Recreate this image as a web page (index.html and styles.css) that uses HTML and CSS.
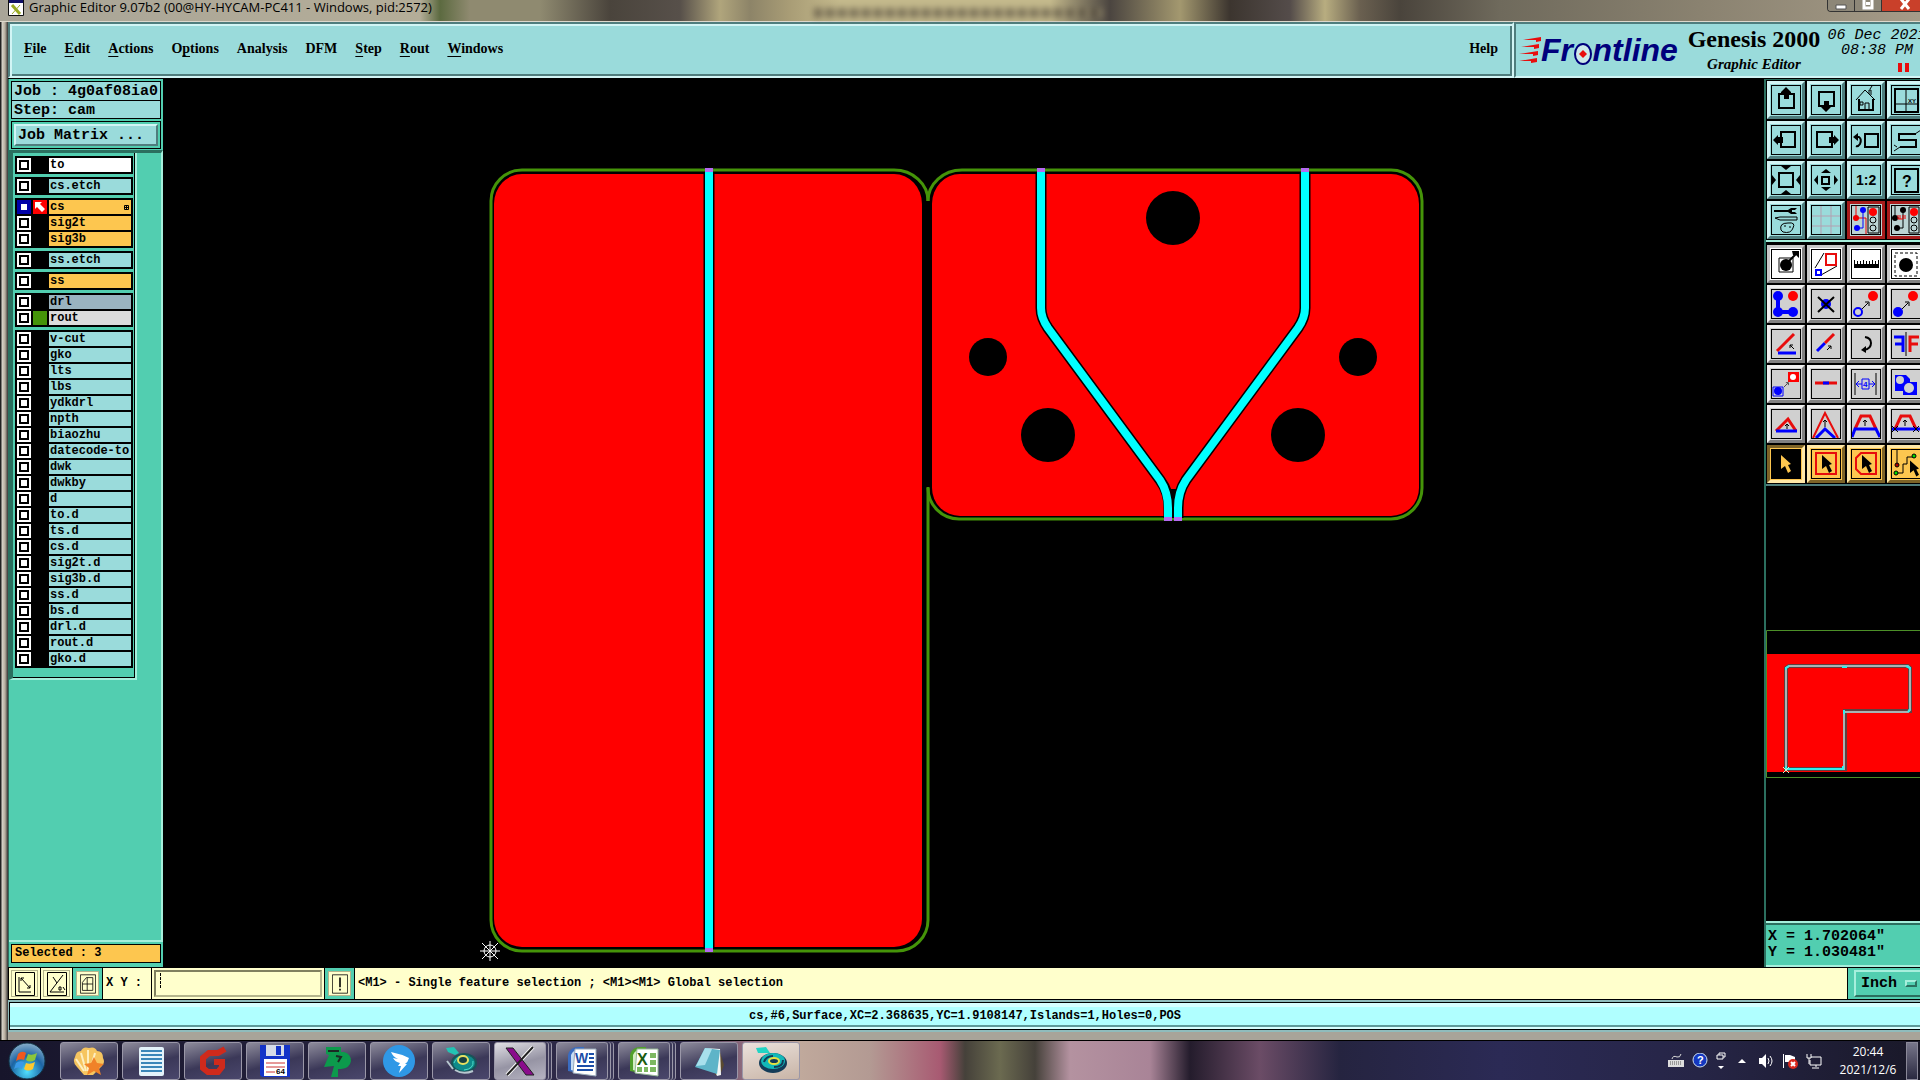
FILE: index.html
```html
<!DOCTYPE html>
<html lang="en">
<head>
    <meta charset="UTF-8">
    <meta name="viewport" content="width=device-width, initial-scale=1.0">
    <title>Graphic Editor 9.07b2</title>
    <link rel="stylesheet" href="styles.css">
</head>
<body>
    <svg class="defs" aria-hidden="true">
        <symbol id="cursor" viewBox="0 0 10 18"><path d="M0 0L10 9L7 10L10 16L7 18L4 11L0 14Z"/></symbol>
        <symbol id="small-arrow" viewBox="0 0 8 8"><path d="M0 8L6 2M3 1H7V5" fill="none" stroke="#000"/></symbol>
    </svg>

    <div class="window">
        <header class="title-bar">
            <svg class="app-icon" viewBox="0 0 16 16"><path fill="#fff" stroke="#111" d="M.5 0V15.500H15.500V0"/><path fill="#116" d="M1 0H15V3H1Z"/><path stroke="#9a2" stroke-width="3" d="M4 5L12 14"/><path stroke="#9a2" d="M12 5L4 14"/></svg>
            <span class="title-text">Graphic Editor 9.07b2 (00@HY-HYCAM-PC411 - Windows, pid:2572)</span>
            <div class="behind"></div>
            <div class="window-buttons">
                <button aria-label="Minimize"><svg viewBox="0 0 12 12"><path fill="#fff" stroke="#555" d="M1 5H11V9H1Z"/></svg></button>
                <button aria-label="Maximize"><svg viewBox="0 0 12 12"><path fill="none" stroke="#fff" stroke-width="3" d="M2 0V8H10V0"/><path fill="#fff" d="M4 2H8V5H4Z"/></svg></button>
                <button class="close" aria-label="Close"><svg viewBox="0 0 12 12"><path stroke="#fff" stroke-width="3" d="M2 -1L10 9M10 -1L2 9"/></svg></button>
            </div>
        </header>

        <div class="top">
            <nav class="menu">
                <button><u>F</u>ile</button>
                <button><u>E</u>dit</button>
                <button><u>A</u>ctions</button>
                <button>O<u>p</u>tions</button>
                <button>Analysis</button>
                <button>DFM</button>
                <button><u>S</u>tep</button>
                <button><u>R</u>out</button>
                <button><u>W</u>indows</button>
                <button class="help">Help</button>
            </nav>
            <div class="brand">
                <svg class="stripes" viewBox="0 0 22 26"><g fill="#e80c0c"><path d="M4 3L22 0V4L17 5V3Z"/><path d="M2 10L20 7V11L15 12V10Z"/><path d="M0 17L19 14V18L14 19V17Z"/><path d="M0 24L18 21V25L12 26V24Z"/></g></svg>
                <div class="frontline">Fr<span class="ring">o<svg viewBox="0 0 20 24"><ellipse cx="10" cy="12" rx="8" ry="10" fill="#fff8f8" fill-opacity=".5" stroke="#00007c" stroke-width="2"/><path fill="#e80c0c" d="M10 8L14 12L10 16L6 12Z"/></svg></span>ntline</div>
                <div class="product">
                    <div class="product-name">Genesis 2000</div>
                    <div class="product-sub">Graphic Editor</div>
                </div>
                <div class="clock">
                    <div>06 Dec 2021</div>
                    <div>08:38 PM</div>
                    <div class="pause"><i></i><i></i></div>
                </div>
            </div>
        </div>

        <div class="work">
            <aside class="left">
                <div class="job">
                    <div>Job : 4g0af08ia0</div>
                    <div>Step: cam</div>
                </div>
                <div class="matrix"><button>Job Matrix ...</button></div>
                <div class="layers-area">
                    <div class="layers">
                        <div class="group">
                            <label class="layer white"><input type="checkbox"><i></i><span>to</span></label>
                        </div>
                        <div class="group">
                            <label class="layer"><input type="checkbox"><i></i><span>cs.etch</span></label>
                        </div>
                        <div class="group">
                            <label class="layer signal work-layer"><input type="checkbox" checked><i><svg viewBox="0 0 14 14"><path fill="#fff" d="M2 2H9L7 4L12 9L9 12L4 7L2 9Z"/></svg></i><span>cs<svg class="mark" viewBox="0 0 5 5"><path fill="none" stroke="#000" d="M.5 .5H4.500V4.500H.5ZM2.500 0V5M0 2.500H5" stroke-width="1"/></svg></span></label>
                            <label class="layer signal"><input type="checkbox"><i></i><span>sig2t</span></label>
                            <label class="layer signal"><input type="checkbox"><i></i><span>sig3b</span></label>
                        </div>
                        <div class="group">
                            <label class="layer"><input type="checkbox"><i></i><span>ss.etch</span></label>
                        </div>
                        <div class="group">
                            <label class="layer signal"><input type="checkbox"><i></i><span>ss</span></label>
                        </div>
                        <div class="group">
                            <label class="layer drill"><input type="checkbox"><i></i><span>drl</span></label>
                            <label class="layer rout"><input type="checkbox"><i></i><span>rout</span></label>
                        </div>
                        <div class="group">
                            <label class="layer"><input type="checkbox"><i></i><span>v-cut</span></label>
                            <label class="layer"><input type="checkbox"><i></i><span>gko</span></label>
                            <label class="layer"><input type="checkbox"><i></i><span>lts</span></label>
                            <label class="layer"><input type="checkbox"><i></i><span>lbs</span></label>
                            <label class="layer"><input type="checkbox"><i></i><span>ydkdrl</span></label>
                            <label class="layer"><input type="checkbox"><i></i><span>npth</span></label>
                            <label class="layer"><input type="checkbox"><i></i><span>biaozhu</span></label>
                            <label class="layer"><input type="checkbox"><i></i><span>datecode-to</span></label>
                            <label class="layer"><input type="checkbox"><i></i><span>dwk</span></label>
                            <label class="layer"><input type="checkbox"><i></i><span>dwkby</span></label>
                            <label class="layer"><input type="checkbox"><i></i><span>d</span></label>
                            <label class="layer"><input type="checkbox"><i></i><span>to.d</span></label>
                            <label class="layer"><input type="checkbox"><i></i><span>ts.d</span></label>
                            <label class="layer"><input type="checkbox"><i></i><span>cs.d</span></label>
                            <label class="layer"><input type="checkbox"><i></i><span>sig2t.d</span></label>
                            <label class="layer"><input type="checkbox"><i></i><span>sig3b.d</span></label>
                            <label class="layer"><input type="checkbox"><i></i><span>ss.d</span></label>
                            <label class="layer"><input type="checkbox"><i></i><span>bs.d</span></label>
                            <label class="layer"><input type="checkbox"><i></i><span>drl.d</span></label>
                            <label class="layer"><input type="checkbox"><i></i><span>rout.d</span></label>
                            <label class="layer"><input type="checkbox"><i></i><span>gko.d</span></label>
                        </div>
                    </div>
                </div>
                <div class="selected">Selected : 3</div>
            </aside>

            <main class="canvas">
                <svg viewBox="163 79 1601 888" preserveAspectRatio="xMinYMin meet">
                    <!-- copper -->
                    <path fill="#f00" d="M522 174H894A28 30 0 0 1 922 204V919A28 28 0 0 1 894 947H522A28 28 0 0 1 494 919V204A28 30 0 0 1 522 174Z"/>
                    <path fill="#f00" d="M960 174H1391A28 30 0 0 1 1419 204V488A28 28 0 0 1 1391 516H960A28 28 0 0 1 932 488V204A28 30 0 0 1 960 174Z"/>
                    <g fill="#000">
                        <circle cx="1173" cy="218" r="27"/>
                        <circle cx="988" cy="357" r="19"/>
                        <circle cx="1358" cy="357" r="19"/>
                        <circle cx="1048" cy="435" r="27"/>
                        <circle cx="1298" cy="435" r="27"/>
                    </g>
                    <!-- rout outline -->
                    <g fill="none" stroke="#459409" stroke-width="3">
                        <path d="M928 201A34 31 0 0 0 894 170H522A31 31 0 0 0 491 201V920A31 31 0 0 0 522 951H897A31 31 0 0 0 928 920V487"/>
                        <path d="M928 201A34 31 0 0 1 962 170H1391A31 31 0 0 1 1422 201V488A31 31 0 0 1 1391 519H959A31 31 0 0 1 928 488"/>
                    </g>
                    <!-- v-cut lines -->
                    <g fill="none" stroke="#000" stroke-width="11">
                        <path d="M709 172V949"/>
                        <path d="M1041 172V308Q1041 318 1048 328L1160 480Q1169 492 1169 508V518"/>
                        <path d="M1305 172V308Q1305 318 1298 328L1186 480Q1178 492 1178 508V518"/>
                    </g>
                    <path d="M1169 489H1178V518H1169Z"/>
                    <g fill="none" stroke="#0ff" stroke-width="8">
                        <path d="M709 172V949"/>
                        <path d="M1041 172V308Q1041 318 1048 328L1160 480Q1168 492 1168 508V518"/>
                        <path d="M1305 172V308Q1305 318 1298 328L1186 480Q1178 492 1178 508V518"/>
                    </g>
                    <path stroke="#b46af0" stroke-width="4" d="M705 170H713M705 950H713M1037 170H1045M1301 170H1309M1164 519H1172M1174 519H1182"/>
                    <!-- origin -->
                    <g fill="none" stroke="#fff">
                        <circle cx="490" cy="951" r="6"/>
                        <path d="M480 951H500M490 941V961M482 943L498 959M498 943L482 959"/>
                    </g>
                </svg>
            </main>

            <aside class="right">
                <div class="tools view">
                    <button><svg viewBox="0 0 30 30"><path class="k2" d="M8 9H23V23H8Z"/><path d="M15 2L20 7V9H18V14H13V9H10V7Z"/></svg></button>
                    <button><svg viewBox="0 0 30 30"><path class="k2" d="M8 7H23V21H8Z"/><path d="M15 27L20 22V20H18V16H13V20H10V22Z"/></svg></button>
                    <button><svg viewBox="0 0 30 30"><path class="k1" d="M5 15L14 5L24 15M18 9V5H20V10M19 4L21 1M14 26V18H18V26M9 17H12V20H9Z"/><path class="k2" d="M8 14V25H22V14"/></svg></button>
                    <button><svg viewBox="0 0 30 30"><path class="k2" d="M4 4H27V27H4Z"/><path class="k1" d="M15 4V27M4 19H27"/><text x="17" y="18" font-size="6">XY</text></svg></button>
                    <button><svg viewBox="0 0 30 30"><path class="k2" d="M10 7H24V22H10Z"/><path d="M2 15L7 10V12H12V18H7V20Z"/></svg></button>
                    <button><svg viewBox="0 0 30 30"><path class="k2" d="M6 7H21V22H6Z"/><path d="M28 15L23 10V12H18V18H23V20Z"/></svg></button>
                    <button><svg viewBox="0 0 30 30"><path class="k2" d="M14 9H27V22H14Z"/><path class="k2" d="M5 12H8Q11 14 9 19Q7 22 5 21"/><path d="M2 12L7 8V16Z"/></svg></button>
                    <button><svg viewBox="0 0 30 30"><path class="k2" d="M25 9H8V15H25V22H9"/><path class="k1" d="M24 9L30 5M9 22L3 26M3 20L6 22"/></svg></button>
                    <button><svg viewBox="0 0 30 30"><path class="k2" d="M8 8H22V22H8Z"/><path d="M10 1H20L15 5ZM10 29H20L15 25ZM1 10V20L5 15ZM29 10V20L25 15Z"/></svg></button>
                    <button><svg viewBox="0 0 30 30"><path class="k2" d="M11 12H18V19H11Z"/><path d="M10 8H20L15 4ZM10 22H20L15 26ZM7 10V20L3 15ZM23 10V20L27 15Z"/></svg></button>
                    <button><svg viewBox="0 0 30 30"><text x="5" y="20" font-size="14">1:2</text></svg></button>
                    <button><svg viewBox="0 0 30 30"><path class="k2" d="M4 4H27V27H4Z"/><text x="11" y="22" font-size="16">?</text></svg></button>
                    <button><svg viewBox="0 0 30 30"><path d="M3 5H17L20 3H26L24 5H21V7H24L26 9H20L17 7H3Z"/><path class="k1" d="M4 13L9 12H26V15H9Z"/><path class="k1" d="M10 25Q8 18 17 18Q25 17 22 23Q20 29 12 27ZM13 21H15M18 22H20"/></svg></button>
                    <button><svg viewBox="0 0 30 30"><path stroke="#b39fb0" d="M10 1V29M20 1V29M1 11H29M1 21H29"/></svg></button>
                    <button class="alert"><svg viewBox="0 0 30 30"><path fill="none" stroke="#e00" d="M5 1V13H15V29"/><path fill="none" stroke="#00f" d="M12 5V23H6"/><g fill="#00f"><circle cx="12" cy="5" r="3"/><circle cx="6" cy="23" r="3"/></g><circle cx="5" cy="13" r="3" fill="#e00"/><path class="k1" d="M17 2H28V28H17Z"/><circle cx="22" cy="7" r="4" fill="#f00"/><circle class="k1" cx="22" cy="15" r="3"/><circle class="k1" cx="22" cy="23" r="3"/></svg></button>
                    <button class="alert"><svg viewBox="0 0 30 30"><path class="k1" d="M4 1V13M12 5V23H6M4 13H8"/><circle cx="12" cy="5" r="3"/><circle cx="6" cy="23" r="3"/><circle cx="4" cy="13" r="3"/><path stroke="#e00" fill="none" d="M7 10V14H12V10M9 10V14M14 10V14"/><path class="k1" d="M18 2H28V28H18Z"/><circle cx="23" cy="7" r="4" fill="#f00"/><circle class="k1" cx="23" cy="15" r="3"/><circle class="k1" cx="23" cy="23" r="3"/></svg></button>
                </div>
                <div class="tools edit">
                    <button class="paper"><svg viewBox="0 0 30 30"><path class="k1" d="M8 9H22V23H8Z"/><circle cx="15" cy="16" r="6"/><path class="k2" d="M18 12L26 4"/><path d="M21 2H28V9L25 6H22Z"/></svg></button>
                    <button class="paper"><svg viewBox="0 0 30 30"><path class="k1" d="M4 19L13 4M10 26L26 17"/><path class="r2" d="M15 5H25V16H15Z"/><path class="b2" d="M5 21H10V26H5Z"/></svg></button>
                    <button class="paper"><svg viewBox="0 0 30 30"><path d="M3 11H4V15H6V12H7V15H9V12H10V15H12V11H13V15H15V12H16V15H18V12H19V15H21V11H22V15H24V12H25V15H27V11H28V19H3Z"/></svg></button>
                    <button class="paper"><svg viewBox="0 0 30 30"><path class="k1" stroke-dasharray="3 2" d="M4 4H26V27H4Z"/><circle cx="15" cy="16" r="7"/></svg></button>
                    <button><svg viewBox="0 0 30 30"><path fill="none" stroke="#00f" stroke-width="4" d="M7 7V23H22"/><g fill="#00f"><circle cx="7" cy="7" r="5"/><circle cx="7" cy="23" r="5"/><circle cx="22" cy="23" r="5"/></g><circle cx="22" cy="7" r="5" fill="#f00"/></svg></button>
                    <button><svg viewBox="0 0 30 30"><circle cx="15" cy="15" r="5" fill="#00f"/><path class="k2" d="M7 8L23 23M23 8L7 23"/></svg></button>
                    <button><svg viewBox="0 0 30 30"><circle class="b2" cx="7" cy="23" r="4"/><circle cx="22" cy="7" r="5" fill="#f00"/><use href="#small-arrow" x="11" y="12" width="8" height="8"/></svg></button>
                    <button><svg viewBox="0 0 30 30"><circle cx="7" cy="23" r="5" fill="#00f"/><circle cx="22" cy="7" r="5" fill="#f00"/><use href="#small-arrow" x="11" y="12" width="8" height="8"/></svg></button>
                    <button><svg viewBox="0 0 30 30"><path class="r3" d="M6 22L23 5"/><path class="b3" d="M7 24H25"/><path class="k1" d="M23 20L19 16M19 19V16H22"/></svg></button>
                    <button><svg viewBox="0 0 30 30"><path class="b3" d="M6 22L14 14"/><path class="r3" d="M14 14L23 5"/><path class="k1" d="M16 21L20 17M17 17H20V20"/></svg></button>
                    <button><svg viewBox="0 0 30 30"><path class="k2" d="M14 8Q20 9 20 14Q20 20 13 21"/><path d="M10 21L15 17V24Z"/></svg></button>
                    <button><svg viewBox="0 0 30 30"><path class="b3" d="M3 8H12V23M4 15H12"/><path class="k1" d="M15 3V27"/><path class="r3" d="M28 8H19V23M19 15H27"/></svg></button>
                    <button><svg viewBox="0 0 30 30"><path fill="none" stroke="#00f" d="M2 18H12V27H2Z"/><circle cx="7" cy="22" r="4" fill="#00f"/><path fill="#f00" d="M17 3H28V13H17Z"/><circle cx="22" cy="8" r="3" fill="#fff"/><use href="#small-arrow" x="13" y="13" width="5" height="5"/></svg></button>
                    <button><svg viewBox="0 0 30 30"><path class="r3" d="M4 14H26"/><path class="b3" d="M12 14H18"/></svg></button>
                    <button><svg viewBox="0 0 30 30"><path class="k1" d="M4 4V26M25 4V26"/><path fill="none" stroke="#00f" d="M11 10H18V20H11ZM5 15H11M18 15H24M8 12L5 15L8 18M21 12L24 15L21 18"/><text x="12" y="18" font-size="8" fill="#00f">4</text></svg></button>
                    <button><svg viewBox="0 0 30 30"><path fill="#00f" d="M4 6H15L19 10V13H26V26H12V22H4Z"/><circle cx="9" cy="11" r="4" fill="#d0d0d0"/><circle cx="18" cy="19" r="5" fill="#d0d0d0"/></svg></button>
                    <button><svg viewBox="0 0 30 30"><path class="r3" d="M5 22L17 10L25 22"/><path class="b3" d="M5 22H26"/><path class="k1" d="M16 20V15M14 17L16 15L18 17"/></svg></button>
                    <button><svg viewBox="0 0 30 30"><path class="r2" d="M2 29L14 4L27 29"/><path class="b3" d="M5 29L14 20L24 29"/><path class="k1" d="M14 18V11M12 13L14 11L16 13"/></svg></button>
                    <button><svg viewBox="0 0 30 30"><path class="r3" d="M4 20L10 7H19L25 20"/><path class="b3" d="M1 28L4 20H25L29 28"/><path class="k1" d="M14 17V11M12 13L14 11L16 13"/></svg></button>
                    <button><svg viewBox="0 0 30 30"><path class="r3" d="M4 20L10 7H19L25 20"/><path class="b3" d="M1 20H29"/><path class="k1" d="M14 17V11M12 13L14 11L16 13M1 17L7 23M7 17L1 23M22 17L28 23M28 17L22 23"/></svg></button>
                    <button class="pick active"><svg viewBox="0 0 30 30"><use href="#cursor" x="10" y="6" width="10" height="18" fill="#fdc64f"/></svg></button>
                    <button class="pick"><svg viewBox="0 0 30 30"><path class="r2" d="M5 4H25V25H5Z"/><use href="#cursor" x="11" y="6" width="10" height="18"/></svg></button>
                    <button class="pick"><svg viewBox="0 0 30 30"><path class="r2" d="M10 4H25V25H10L5 20V9Z"/><use href="#cursor" x="11" y="6" width="10" height="18"/></svg></button>
                    <button class="pick"><svg viewBox="0 0 30 30"><path class="k1" d="M6 1V16M5 24H12V15H16V8H23"/><g stroke="#000"><circle cx="6" cy="16" r="2" fill="#a00"/><circle cx="5" cy="24" r="2" fill="#0d0"/><circle cx="23" cy="7" r="2" fill="#0d0"/></g><use href="#cursor" x="19" y="11" width="9" height="17"/></svg></button>
                </div>
                <div class="overview">
                    <svg viewBox="1766 486 154 435" preserveAspectRatio="xMinYMin slice">
                        <path fill="#f00" d="M1766 654H1920V772H1766Z"/>
                        <path fill="none" stroke="#4c8f28" d="M1925 630.500H1766.500V777.500H1925"/>
                        <path fill="none" stroke="#5f4040" stroke-width="4" d="M1789 666H1908L1910 668V711H1845V769H1786V668Z"/>
                        <path fill="none" stroke="#a8b4b4" stroke-width="2" d="M1789 666H1908L1910 668V710L1908 712H1844V769H1786V668Z"/>
                        <path fill="none" stroke="#3ee" stroke-width="2" d="M1786 670V668L1789 666M1906 666L1910 668V670M1842 667H1847M1844 714V710M1910 709L1908 712M1786 766V769H1843V766"/>
                        <path stroke="#cfc" d="M1783 773L1789 767M1783 767L1789 773"/>
                    </svg>
                </div>
                <div class="coords">
                    <div>X = 1.702064"</div>
                    <div>Y = 1.030481"</div>
                </div>
            </aside>
        </div>

        <div class="command">
            <button class="mode"><svg viewBox="0 0 20 24"><path d="M.5 .5H19.500V23.500H.5Z"/><path d="M4 5V20H16M6 6L15 16M6 9V6H9M15 13V16H12"/></svg></button>
            <button class="mode"><svg viewBox="0 0 20 24"><path d="M.5 .5H19.500V23.500H.5Z"/><path d="M16 3L3 20H17M6 5L10 11M12 15H14V18H12ZM16 15L18 18"/></svg></button>
            <button class="mode teal"><svg viewBox="0 0 20 24"><path d="M.5 .5H19.500V23.500H.5Z"/><path d="M3 10L8 4H16V20H3ZM3 12H16M9 4V20"/></svg></button>
            <label class="xy" for="xy">X Y :</label>
            <div class="entry"><input id="xy" type="text"><i class="caret"></i></div>
            <button class="mode teal"><svg viewBox="0 0 20 24"><path d="M.5 .5H19.500V23.500H.5Z"/><path d="M10 4V16M10 18V20" stroke-width="2"/></svg></button>
            <div class="message">&lt;M1&gt; - Single feature selection ; &lt;M1&gt;&lt;M1&gt; Global selection</div>
            <div class="units"><select aria-label="Units"><option>Inch</option></select><i></i></div>
        </div>
        <div class="status"><div>cs,#6,Surface,XC=2.368635,YC=1.9108147,Islands=1,Holes=0,POS</div></div>
    </div>

    <footer class="taskbar">
        <button class="start" aria-label="Start"><svg viewBox="0 0 38 38"><defs><radialGradient id="orb" cx=".5" cy=".8" r=".9"><stop offset="0" stop-color="#4fe0ff"/><stop offset=".5" stop-color="#1c64a4"/><stop offset="1" stop-color="#a8c4d4"/></radialGradient></defs><circle cx="19" cy="19" r="18" fill="url(#orb)" stroke="#134"/><path fill="#f0581e" d="M10 12Q14 8 18 11L16 18Q12 16 8 19Z"/><path fill="#8cc63a" d="M20 12Q24 14 29 11L27 18Q22 21 18 18Z"/><path fill="#3a9ae8" d="M8 21Q12 18 16 20L14 27Q10 24 6 27Z"/><path fill="#fdc82e" d="M18 21Q22 23 27 20L25 27Q20 30 16 27Z"/></svg></button>
        <button class="app"><svg viewBox="0 0 32 32"><path fill="#f6c560" d="M16 3Q22 1 24 6Q30 6 30 13Q33 18 27 23L20 30H11L4 22Q-1 17 2 12Q3 6 8 6Q10 1 16 3Z"/><path fill="none" stroke="#fdeec0" stroke-width="2" d="M15 26V5M13 26L8 8M11 26L3 14M17 26L22 8"/><path fill="#f08228" d="M21 12L24 18L31 19L26 23L28 30L21 26L14 30L16 23L11 19L18 18Z"/></svg></button>
        <button class="app"><svg viewBox="0 0 32 32"><rect x="4" y="2" width="25" height="29" rx="2" fill="#e4f3fa"/><path stroke="#3a86b8" stroke-width="2" d="M6 6H27M6 10H27M6 14H27M6 18H27M6 22H27M6 26H27"/></svg></button>
        <button class="app"><svg viewBox="0 0 32 32"><path fill="none" stroke="#cf2a1c" stroke-width="6" d="M28 4L21 8H12L6 13V23L11 27H21L25 22V17H17"/></svg></button>
        <button class="app"><svg viewBox="0 0 32 32"><path fill="#1434c8" d="M1 0H31V32H3L1 30Z"/><path fill="#d6dce8" d="M7 0H25V11H7Z"/><path fill="#1434c8" d="M17 1H22V10H17Z"/><path fill="#fff" d="M5 14H28V31H5Z"/><path stroke="#c33" d="M7 18H26M7 22H26M7 27H16"/><text x="17" y="29" font-size="8">64</text></svg></button>
        <button class="app"><svg viewBox="0 0 32 32"><path fill="#0c9a4c" d="M5 2H20V7H23Q30 9 30 16Q29 23 20 24H17V32H10L13 21L3 22L8 10L5 9Z"/><path fill="none" stroke="#1c2a24" stroke-width="2" d="M7 6H18M15 11L20 12L17 17"/></svg></button>
        <button class="app"><svg viewBox="0 0 32 32"><ellipse cx="16" cy="16" rx="16" ry="16" fill="#2f98e6"/><path fill="#fff" d="M8 7Q18 9 26 13Q25 17 22 19H24L16 28L18 21H15L17 18Q12 17 10 13L15 14Q10 12 8 7Z"/></svg></button>
        <button class="app"><svg viewBox="0 0 32 32"><ellipse cx="19" cy="18" rx="12" ry="9" fill="#0e8a8a" stroke="#185458" stroke-width="2"/><path fill="#22c4b4" d="M1 3L9 2L14 8L10 10L3 7Z"/><path fill="none" stroke="#50dcc8" d="M9 18Q12 10 20 11M28 16Q29 24 19 25"/><ellipse cx="18" cy="15" rx="5" ry="4" fill="#184040" stroke="#e8e060" stroke-width="2"/><path stroke="#b8c8d0" stroke-width="2" fill="none" d="M2 16L8 24M10 25Q18 30 28 26"/></svg></button>
        <button class="app stacked lit"><svg viewBox="0 0 32 32"><path stroke="#fff" stroke-width="4" d="M29 2L3 30"/><path fill="#8a0c8c" stroke="#222" d="M2 3H9L30 30H22Z"/><path stroke="#222" stroke-width="2" d="M29 2L3 30"/></svg></button>
        <button class="app stacked"><svg viewBox="0 0 32 32"><path fill="#3a6cc0" d="M2 10Q4 2 12 2H18V29L2 26Z"/><path fill="#c6dcf4" d="M5 10Q7 5 13 4V27L5 25Z"/><path fill="#fff" stroke="#9ab" d="M9 4H30V31L7 28Z"/><text x="9" y="18" font-size="14" fill="#1c4ea8">W</text><path stroke="#1c4ea8" stroke-width="2" d="M23 9H28M23 13H28M23 17H28M11 21H28M11 25H27"/></svg></button>
        <button class="app stacked"><svg viewBox="0 0 32 32"><path fill="#52a02c" d="M2 10Q4 2 12 2H18V29L2 26Z"/><path fill="#d4ecc4" d="M5 10Q7 5 13 4V27L5 25Z"/><path fill="#fff" stroke="#9b9" d="M9 4H30V31L7 28Z"/><path fill="#7cb860" d="M22 8H28V13H22ZM22 15H28V20H22ZM22 22H28V27H22ZM9 22H14V27H9ZM16 22H20V27H16Z"/><text x="9" y="20" font-size="16" fill="#1c5c10">X</text></svg></button>
        <button class="app"><svg viewBox="0 0 32 32"><path fill="#5a4a30" d="M26 4L31 20L27 30L22 30Z"/><path fill="#f2f6f4" d="M12 3L27 4L28 30L24 31Z"/><path fill="#5eb4c8" d="M12 3L27 5L24 29L2 22Z"/><path fill="#a8e0ec" d="M12 3L19 4L12 20L3 21Z"/></svg></button>
        <button class="app glass"><svg viewBox="0 0 32 32"><ellipse cx="18" cy="18" rx="14" ry="10" fill="#143c58"/><ellipse cx="18" cy="16" rx="12" ry="8" fill="#12b8b8"/><path fill="#22d4c4" d="M1 3L11 2L15 8L3 8Z"/><path fill="none" stroke="#143c58" stroke-width="2" d="M9 17Q11 11 18 11M28 15Q28 22 19 22"/><ellipse cx="19" cy="16" rx="5" ry="3" fill="#143c58" stroke="#e8e040" stroke-width="2"/></svg></button>
        <div class="tray">
            <svg class="keyboard" viewBox="0 0 16 16"><path fill="#ddd" d="M0 7H16V14H0Z"/><path fill="none" stroke="#ddd" d="M4 6Q5 2 9 4Q12 5 13 1"/><path stroke="#555" stroke-dasharray="1 1" d="M2 9H14M2 11H14"/></svg>
            <svg class="question" viewBox="0 0 16 16"><circle cx="8" cy="7" r="7" fill="#1438c0" stroke="#cde"/><text x="5" y="11" font-size="11" fill="#fff">?</text></svg>
            <svg class="restore" viewBox="0 0 10 18"><path fill="none" stroke="#fff" d="M3 3V1H9V5H7M1 3H7V7H1Z"/><path fill="#fff" d="M2 14H8L5 17Z"/></svg>
            <svg class="up" viewBox="0 0 8 8"><path fill="#fff" d="M0 6L4 2L8 6Z"/></svg>
            <svg class="icon" viewBox="0 0 16 16"><path fill="#fff" d="M1 5H4L8 1V15L4 11H1Z"/><path fill="none" stroke="#fff" d="M10 5Q12 8 10 11M12 3Q16 8 12 13"/></svg>
            <svg class="icon" viewBox="0 0 16 16"><path fill="#fff" d="M1 1H2V15H1ZM3 2H8L13 4V9H3Z"/><circle cx="11" cy="11" r="5" fill="#d8281c"/><path stroke="#fff" stroke-width="2" d="M9 9L13 13M13 9L9 13"/></svg>
            <svg class="icon" viewBox="0 0 16 16"><path fill="none" stroke="#fff" d="M5 4H15V12H4V7M10 12V14M6 15H13M1 1V5H5V1M3 5V11"/></svg>
            <div class="time"><div>20:44</div><div>2021/12/6</div></div>
            <button class="desktop" aria-label="Show desktop"></button>
        </div>
    </footer>
</body>
</html>
```
FILE: styles.css
```css
* {
    box-sizing: border-box;
}

html, body {
    margin: 0;
    height: 100%;
    overflow: hidden;
}

body {
    display: flex;
    flex-direction: column;
    background: #000;
    font-family: "Liberation Mono", monospace;
    font-size: 12px;
    font-weight: bold;
    color: #000;
}

button, input, select {
    font: inherit;
    color: inherit;
    margin: 0;
    padding: 0;
    border: none;
    border-radius: 0;
    background: none;
}

svg {
    display: block;
}

.defs {
    position: absolute;
    width: 0;
    height: 0;
}

/* window frame */
.window {
    flex: 1;
    min-height: 0;
    display: flex;
    flex-direction: column;
    padding: 0 0 8px 8px;
    background: linear-gradient(90deg, #222 1px, #d8d4ca 2px, #b7ae9f 5px, #333 8px, #a8a499 8px);
}

.title-bar {
    flex: none;
    display: flex;
    align-items: flex-start;
    height: 22px;
    margin-left: -8px;
    padding-left: 8px;
    border-bottom: 1px solid #ddd8cc;
    background: linear-gradient(90deg, #a9a598 0, #b4ad98 420px, #5c6a40 440px, #8f8a70 470px, #8f8a70 540px, #4a443c 610px, #57504a 680px, #b0a57c 720px, #8d8468 750px, #a99d76 790px, #c4b98c 840px, #c4b98c 1050px, #4b4540 1110px, #a3986f 1180px, #3c352f 1230px, #544c4a 1290px, #b8ad80 1325px, #6a6050 1360px, #4a443c 1400px, #6f6a5c 1500px, #8a8270 1700px, #a59b88 1920px);
}

.app-icon {
    width: 16px;
    height: 16px;
}

.title-text {
    margin-left: 5px;
    font-family: "Open Sans", sans-serif;
    font-size: 13px;
    font-weight: normal;
    line-height: 14px;
}

/* blurred caption of the window behind the glass */
.behind {
    flex: none;
    width: 288px;
    height: 10px;
    margin: 8px 0 0 382px;
    background: repeating-linear-gradient(90deg, #4a4236 0 7px, #a89c78 9px 12px);
    filter: blur(3px);
    opacity: .6;
}

.window-buttons {
    display: flex;
    margin-left: auto;
    width: 93px;
    height: 12px;
    overflow: hidden;
    border: 1px solid #333;
    border-top: none;
    border-right: none;
    border-radius: 0 0 0 4px;
}

.window-buttons button {
    flex: 0 0 27px;
    display: flex;
    justify-content: center;
    border-right: 1px solid #333;
    background: #8d8778;
}

.window-buttons svg {
    width: 12px;
    height: 12px;
}

.window-buttons .close {
    flex-basis: 46px;
    background: #c9402a;
}

/* menu */
.top {
    flex: none;
    display: flex;
    height: 57px;
    border-bottom: 1px solid #000;
    background: #9adbdb;
}

.menu {
    flex: 1;
    display: flex;
    align-items: center;
    padding: 0 12px 2px 14px;
    border: 2px solid #4f7d7d;
    border-right-color: #d2f5f5;
    border-bottom-color: #d2f5f5;
    box-shadow: inset 2px 2px #d2f5f5, inset -2px -2px #4f7d7d;
    font-family: "Liberation Serif", serif;
    font-size: 14px;
}

.menu button {
    margin-right: 18px;
}

.menu u {
    text-underline-offset: 3px;
}

.menu .help {
    margin-left: auto;
    margin-right: 2px;
}

.brand {
    flex: none;
    display: flex;
    align-items: flex-start;
    width: 406px;
    padding: 4px 0 0 3px;
    border: 2px solid #4f7d7d;
    border-right: none;
    border-bottom: 2px solid #d2f5f5;
    white-space: nowrap;
}

.stripes {
    flex: none;
    width: 22px;
    height: 26px;
    margin-top: 9px;
}

.frontline {
    flex: none;
    margin-top: 4px;
    width: 144px;
    font-family: "Liberation Sans", sans-serif;
    font-size: 32px;
    font-style: italic;
    line-height: 36px;
    color: #00007c;
}

.ring {
    position: relative;
    color: transparent;
}

.ring svg {
    position: absolute;
    left: 0;
    bottom: 2px;
    width: 20px;
    height: 24px;
}

.product {
    flex: none;
    width: 138px;
    font-family: "Liberation Serif", serif;
    text-align: center;
}

.product-name {
    font-size: 24px;
    line-height: 22px;
}

.product-sub {
    margin-top: 6px;
    font-size: 15px;
    font-style: italic;
}

.clock {
    flex: none;
    width: 108px;
    font-size: 15px;
    font-style: italic;
    font-weight: normal;
    line-height: 15px;
    text-align: center;
}

.pause {
    display: flex;
    justify-content: flex-end;
    gap: 3px;
    margin: 5px 22px 0 0;
}

.pause i {
    width: 4px;
    height: 9px;
    background: #e80c0c;
}

/* left column */
.work {
    flex: 1;
    min-height: 0;
    display: flex;
    background: #000;
}

.left {
    flex: none;
    width: 155px;
    display: flex;
    flex-direction: column;
    background: #52ceb0;
    border-left: 1px solid #2b6f5f;
}

.job {
    margin: 2px;
    border: 1px solid #000;
    font-size: 15px;
    background: #9adbdb;
}

.job div {
    height: 18px;
    padding-left: 2px;
    line-height: 19px;
}

.job div + div {
    border-top: 1px solid #000;
}

.matrix {
    margin: 0 2px;
    padding: 2px;
    border: 1px solid #000;
}

.matrix button {
    width: 100%;
    height: 22px;
    padding-left: 2px;
    text-align: left;
    font-size: 15px;
    background: #9adbdb;
    border: 2px solid #4f7d7d;
    border-left-color: #d2f5f5;
    border-top-color: #d2f5f5;
}

.layers-area {
    flex: 1;
    margin-top: 1px;
    border-top: 3px solid #2b6f5f;
    border-right: 2px solid #a6efdc;
    border-bottom: 2px solid #a6efdc;
}

.layers {
    width: 128px;
    padding: 3px 2px 10px 2px;
    display: flex;
    flex-direction: column;
    gap: 3px;
    border-left: 4px solid #2b6f5f;
    border-right: 2px solid #a6efdc;
    border-bottom: 2px solid #a6efdc;
    box-shadow: inset -1px -1px #000;
}

.group {
    padding: 1px 0;
    background: #000;
}

.layer {
    display: flex;
    align-items: center;
    gap: 2px;
    height: 16px;
    padding: 0 2px;
}

.layer input {
    appearance: none;
    flex: none;
    width: 14px;
    height: 14px;
    border: 2px solid #fff;
    background: #fff;
    box-shadow: inset 0 0 0 2px #000;
}

.layer input:checked {
    border-color: #0000a8;
    box-shadow: inset 0 0 0 2px #0000a8;
}

.layer i {
    flex: none;
    width: 14px;
    height: 14px;
}

.layer span {
    flex: 1;
    display: flex;
    align-items: center;
    justify-content: space-between;
    height: 14px;
    padding-left: 1px;
    line-height: 14px;
    white-space: nowrap;
    background: #9adbdb;
}

.layer .mark {
    width: 5px;
    height: 5px;
    margin-right: 2px;
}

.white span {
    background: #fff;
}

.signal span {
    background: #fdc64f;
}

.drill span {
    background: #9ab4c0;
}

.rout span {
    background: #dcdcdc;
}

.rout i {
    background: #459409;
}

.work-layer i {
    background: #f00;
}

.selected {
    margin: 2px 2px 4px;
    height: 19px;
    padding-left: 3px;
    border: 1px solid #000;
    line-height: 17px;
    background: #fdc64f;
}

/* drawing */
.canvas {
    flex: 1;
    min-width: 0;
}

.canvas svg {
    width: 100%;
    height: 100%;
}

/* right column */
.right {
    flex: none;
    width: 156px;
    display: flex;
    flex-direction: column;
    overflow: hidden;
    border-left: 2px solid #2b6f5f;
}

.tools {
    flex: none;
    display: grid;
    grid-template-columns: repeat(4, 38px);
    grid-auto-rows: 38px;
    gap: 2px;
    padding-left: 1px;
}

.view {
    padding-top: 1px;
    padding-bottom: 1px;
    border-top: 1px solid #2b6f5f;
    border-bottom: 2px solid #a6efdc;
}

.edit {
    padding-top: 3px;
    padding-bottom: 1px;
    border-bottom: 2px solid #4f7d7d;
}

.tools button {
    padding: 1px;
    border: 3px solid #808080;
    border-left-color: #f0f0f0;
    border-top-color: #f0f0f0;
    background: #d0d0d0;
}

.tools svg {
    width: 30px;
    height: 30px;
    outline: 1px solid #000;
    outline-offset: -1px;
}

.view button {
    background: #9adbdb;
    border-color: #d2f5f5 #4f7d7d #4f7d7d #d2f5f5;
}

.view .alert {
    background: #bcd4d4;
    border-color: #a81c1c;
}

.tools .paper {
    background: #fff;
    border-color: #c8c8c8 #808080 #808080 #c8c8c8;
}

.tools .pick {
    background: #fdc64f;
    border-color: #ffe8a8 #7d6327 #7d6327 #ffe8a8;
}

.tools .active {
    border-color: #7d6327 #ffe8a8 #ffe8a8 #7d6327;
}

.active svg {
    background: #000;
}

.k1, .k2, .r2, .b2, .r3, .b3 {
    fill: none;
    stroke: #000;
}

.k2, .r2, .b2 {
    stroke-width: 2;
}

.r3, .b3 {
    stroke-width: 3;
}

.r2, .r3 {
    stroke: #e80c0c;
}

.b2, .b3 {
    stroke: #00f;
}

.tools text, .taskbar text {
    font-family: "Liberation Sans", sans-serif;
    font-weight: bold;
}

.overview {
    flex: 1;
    min-height: 0;
}

.overview svg {
    width: 100%;
    height: 100%;
}

.coords {
    flex: none;
    height: 46px;
    padding: 6px 0 0 2px;
    border-top: 2px solid #a6efdc;
    border-bottom: 2px solid #a6efdc;
    box-shadow: inset 0 2px #2b6f5f;
    background: #52ceb0;
    font-size: 15px;
    line-height: 16px;
    white-space: nowrap;
}

/* command line */
.command {
    flex: none;
    display: flex;
    gap: 1px;
    height: 33px;
    padding: 1px 0 1px 1px;
    background: #000;
}

.command > * {
    background: #ffffcc;
}

.mode {
    width: 31px;
    padding: 2px;
    display: flex;
    align-items: center;
    justify-content: center;
    box-shadow: inset 0 0 0 2px #ffffcc, inset 0 0 0 3px #b5b58c;
}

.mode svg {
    width: 20px;
    height: 24px;
    fill: none;
    stroke: #000;
}

.command .teal {
    width: 29px;
    box-shadow: inset 0 0 0 3px #52ceb0, inset 0 0 0 4px #b5b58c;
}

.teal svg {
    width: 16px;
    height: 20px;
}

.command .xy {
    width: 48px;
    padding-left: 3px;
    line-height: 31px;
}

.entry {
    position: relative;
    width: 172px;
    padding: 2px;
}

.entry input {
    width: 100%;
    height: 27px;
    border: 2px solid #b5b58c;
    border-left-color: #80805f;
    border-top-color: #80805f;
}

.caret {
    position: absolute;
    left: 8px;
    top: 5px;
    height: 15px;
    border-left: 1px dashed #000;
}

.message {
    flex: 1;
    padding-left: 3px;
    line-height: 31px;
}

.command .units {
    position: relative;
    width: 72px;
    padding: 2px 0 2px 6px;
    background: #52ceb0;
}

.units select {
    appearance: none;
    width: 80px;
    height: 27px;
    padding-left: 5px;
    font-size: 15px;
    border: 2px solid #2b6f5f;
    border-left-color: #a6efdc;
    border-top-color: #a6efdc;
}

.units i {
    position: absolute;
    right: 3px;
    top: 12px;
    width: 12px;
    height: 7px;
    border: 2px solid #2b6f5f;
    border-left-color: #a6efdc;
    border-top-color: #a6efdc;
}

.status {
    flex: none;
    height: 32px;
    padding: 2px 0 2px 1px;
    background: #8fbcbc;
}

.status div {
    height: 28px;
    border: 1px solid #000;
    border-right: none;
    box-shadow: inset 0 4px #d6ffff, inset 0 -2px #d6ffff, inset 0 -4px #5d9a9a;
    line-height: 26px;
    text-align: center;
    background: #b0ffff;
}

/* taskbar */
.taskbar {
    flex: none;
    display: flex;
    gap: 4px;
    height: 40px;
    padding: 1px 0 1px 8px;
    background: linear-gradient(90deg, #17152b 0, #2d2947 560px, #2f2a4a 680px, #a77d8c 760px, #c0a99c 800px, #b39a93 870px, #a85a72 940px, #45413a 965px, #6b6a50 1000px, #45413a 1035px, #b492a0 1070px, #a98497 1150px, #241c2c 1190px, #6b4c66 1260px, #252440 1340px, #2b2a55 1500px, #262546 1700px, #191828 1920px);
    border-top: 1px solid #000;
}

.start {
    width: 38px;
    height: 38px;
    margin-right: 10px;
}

.app {
    width: 58px;
    height: 38px;
    display: flex;
    align-items: center;
    justify-content: center;
    border: 1px solid #9a97a8;
    border-radius: 3px;
    background: linear-gradient(165deg, #8d8b9b, #3b3858 55%, #4a476c);
}

.app svg {
    width: 32px;
    height: 32px;
}

.stacked {
    width: 52px;
    margin-right: 6px;
    box-shadow: 2px 0 #3b3858, 3px 0 #9a97a8, 5px 0 #3b3858, 6px 0 #9a97a8;
}

.lit {
    background: linear-gradient(165deg, #e0dfe4, #9694a4 55%, #b6b4c2);
}

.glass {
    background: linear-gradient(165deg, #ebe2dc, #c8b4a6);
}

.tray {
    display: flex;
    align-items: center;
    margin-left: auto;
    padding-right: 2px;
    font-family: "Open Sans", sans-serif;
    font-weight: normal;
    color: #fff;
}

.tray svg {
    width: 16px;
    height: 16px;
    margin-right: 8px;
}

.tray .restore {
    width: 10px;
    height: 18px;
    margin-right: 12px;
}

.tray .up {
    width: 8px;
    height: 8px;
    margin-right: 12px;
}

.time {
    width: 76px;
    line-height: 18px;
    text-align: center;
}

.desktop {
    width: 12px;
    height: 38px;
    border: 1px solid #8a8898;
    background: linear-gradient(#77768a, #2a2940);
}
```
